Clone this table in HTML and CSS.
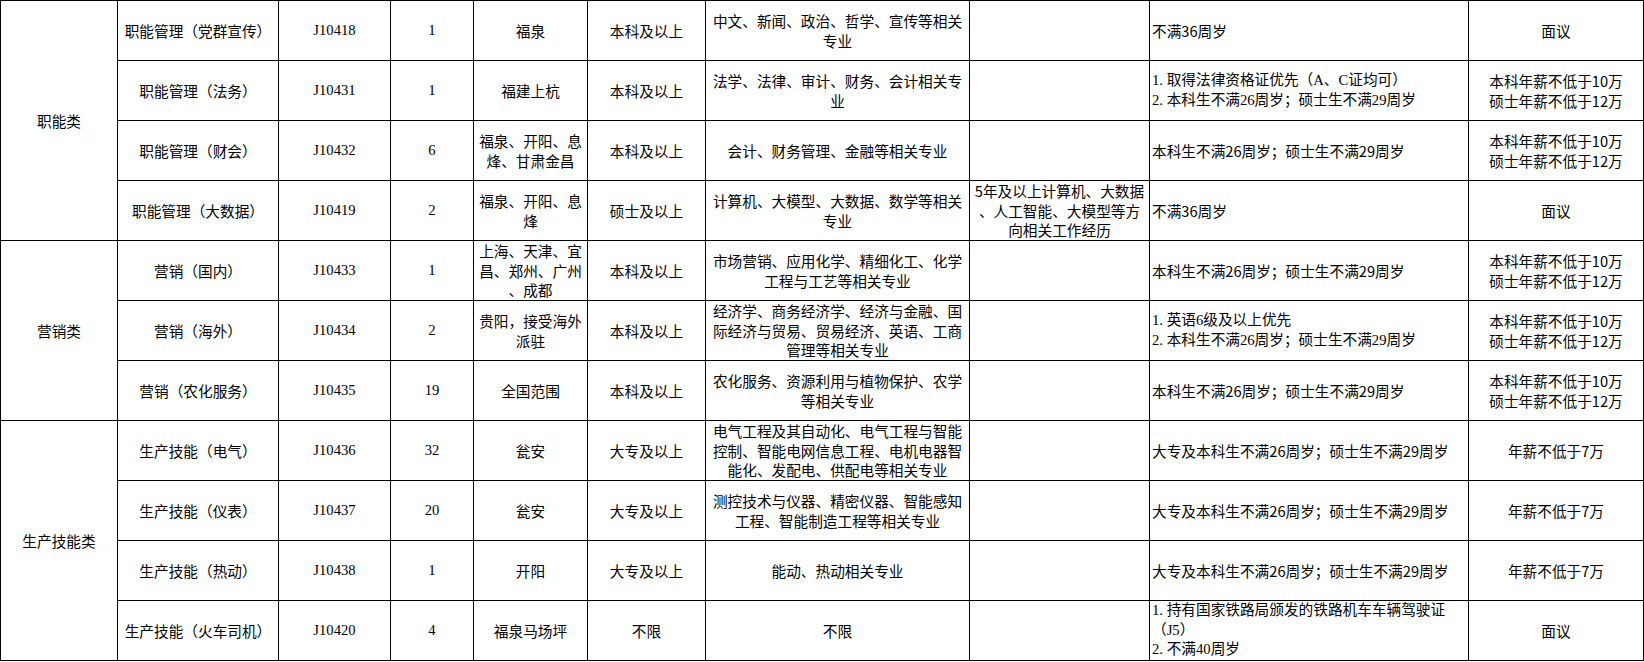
FILE: index.html
```html
<!DOCTYPE html>
<html lang="zh-CN">
<head>
<meta charset="utf-8">
<title>招聘岗位</title>
<link rel="stylesheet" href="styles.css">
</head>
<body>
<table class="jobs">
  <colgroup>
    <col class="c1"><col class="c2"><col class="c3"><col class="c4"><col class="c5">
    <col class="c6"><col class="c7"><col class="c8"><col class="c9"><col class="c10">
  </colgroup>
  <tbody>
    <tr>
      <td class="cat" rowspan="4">职能类</td>
      <td>职能管理（党群宣传）</td><td class="lat">J10418</td><td class="lat">1</td><td>福泉</td><td>本科及以上</td>
      <td>中文、新闻、政治、哲学、宣传等相关<br>专业</td><td></td>
      <td class="req">不满36周岁</td><td>面议</td>
    </tr>
    <tr>
      <td>职能管理（法务）</td><td class="lat">J10431</td><td class="lat">1</td><td>福建上杭</td><td>本科及以上</td>
      <td>法学、法律、审计、财务、会计相关专<br>业</td><td></td>
      <td class="req lat">1. 取得法律资格证优先（A、C证均可）<br>2. 本科生不满26周岁；硕士生不满29周岁</td>
      <td>本科年薪不低于10万<br>硕士年薪不低于12万</td>
    </tr>
    <tr>
      <td>职能管理（财会）</td><td class="lat">J10432</td><td class="lat">6</td><td>福泉、开阳、息<br>烽、甘肃金昌</td><td>本科及以上</td>
      <td>会计、财务管理、金融等相关专业</td><td></td>
      <td class="req">本科生不满26周岁；硕士生不满29周岁</td>
      <td>本科年薪不低于10万<br>硕士年薪不低于12万</td>
    </tr>
    <tr>
      <td>职能管理（大数据）</td><td class="lat">J10419</td><td class="lat">2</td><td>福泉、开阳、息<br>烽</td><td>硕士及以上</td>
      <td>计算机、大模型、大数据、数学等相关<br>专业</td>
      <td>5年及以上计算机、大数据<br>、人工智能、大模型等方<br>向相关工作经历</td>
      <td class="req">不满36周岁</td><td>面议</td>
    </tr>
    <tr>
      <td class="cat" rowspan="3">营销类</td>
      <td>营销（国内）</td><td class="lat">J10433</td><td class="lat">1</td><td>上海、天津、宜<br>昌、郑州、广州<br>、成都</td><td>本科及以上</td>
      <td>市场营销、应用化学、精细化工、化学<br>工程与工艺等相关专业</td><td></td>
      <td class="req">本科生不满26周岁；硕士生不满29周岁</td>
      <td>本科年薪不低于10万<br>硕士年薪不低于12万</td>
    </tr>
    <tr>
      <td>营销（海外）</td><td class="lat">J10434</td><td class="lat">2</td><td>贵阳，接受海外<br>派驻</td><td>本科及以上</td>
      <td>经济学、商务经济学、经济与金融、国<br>际经济与贸易、贸易经济、英语、工商<br>管理等相关专业</td><td></td>
      <td class="req lat">1. 英语6级及以上优先<br>2. 本科生不满26周岁；硕士生不满29周岁</td>
      <td>本科年薪不低于10万<br>硕士年薪不低于12万</td>
    </tr>
    <tr>
      <td>营销（农化服务）</td><td class="lat">J10435</td><td class="lat">19</td><td>全国范围</td><td>本科及以上</td>
      <td>农化服务、资源利用与植物保护、农学<br>等相关专业</td><td></td>
      <td class="req">本科生不满26周岁；硕士生不满29周岁</td>
      <td>本科年薪不低于10万<br>硕士年薪不低于12万</td>
    </tr>
    <tr>
      <td class="cat" rowspan="4">生产技能类</td>
      <td>生产技能（电气）</td><td class="lat">J10436</td><td class="lat">32</td><td>瓮安</td><td>大专及以上</td>
      <td>电气工程及其自动化、电气工程与智能<br>控制、智能电网信息工程、电机电器智<br>能化、发配电、供配电等相关专业</td><td></td>
      <td class="req">大专及本科生不满26周岁；硕士生不满29周岁</td><td>年薪不低于7万</td>
    </tr>
    <tr>
      <td>生产技能（仪表）</td><td class="lat">J10437</td><td class="lat">20</td><td>瓮安</td><td>大专及以上</td>
      <td>测控技术与仪器、精密仪器、智能感知<br>工程、智能制造工程等相关专业</td><td></td>
      <td class="req">大专及本科生不满26周岁；硕士生不满29周岁</td><td>年薪不低于7万</td>
    </tr>
    <tr>
      <td>生产技能（热动）</td><td class="lat">J10438</td><td class="lat">1</td><td>开阳</td><td>大专及以上</td>
      <td>能动、热动相关专业</td><td></td>
      <td class="req">大专及本科生不满26周岁；硕士生不满29周岁</td><td>年薪不低于7万</td>
    </tr>
    <tr>
      <td>生产技能（火车司机）</td><td class="lat">J10420</td><td class="lat">4</td><td>福泉马场坪</td><td>不限</td>
      <td>不限</td><td></td>
      <td class="req lat">1. 持有国家铁路局颁发的铁路机车车辆驾驶证<br>（J5）<br>2. 不满40周岁</td><td>面议</td>
    </tr>
  </tbody>
</table>
</body>
</html>
```

FILE: styles.css
```css
html, body {
  margin: 0;
  padding: 0;
  background: #ffffff;
}

.jobs {
  border-collapse: collapse;
  table-layout: fixed;
  width: 1644px;
  font-family: "Noto Sans CJK SC", sans-serif;
  font-size: 14.67px;
  line-height: 19.5px;
  color: #000000;
}

.c1 { width: 117px; }
.c2 { width: 161px; }
.c3 { width: 112px; }
.c4 { width: 83px; }
.c5 { width: 114px; }
.c6 { width: 118px; }
.c7 { width: 264px; }
.c8 { width: 180px; }
.c9 { width: 319px; }
.c10 { width: 175px; }

.jobs tr {
  height: 60px;
}

.jobs td {
  border: 1px solid #000000;
  padding: 0 1px;
  text-align: center;
  vertical-align: middle;
  white-space: nowrap;
  overflow: hidden;
}

.jobs td.lat {
  font-family: "Liberation Serif", "Noto Sans CJK SC", serif;
}

.jobs td.req {
  text-align: left;
  padding-left: 2px;
}
```
